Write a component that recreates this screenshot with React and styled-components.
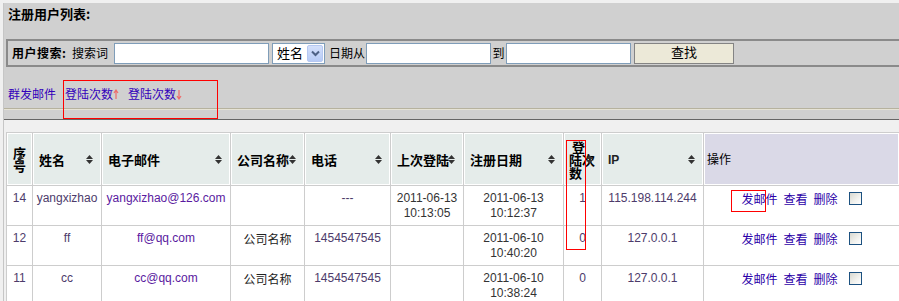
import React from 'react';
import styled, { createGlobalStyle } from 'styled-components';

const GlobalStyle = createGlobalStyle`
    html, body {
        margin: 0;
        padding: 0;
        background: #f0f0f0;
        overflow: hidden;
    }
    body {
        font-family: "Liberation Sans", "Noto Sans CJK SC", sans-serif;
        font-size: 12px;
        color: #333;
    }
`;

const CJK = `"Noto Sans CJK SC", "Liberation Sans", sans-serif`;

const Page = styled.div`
    position: relative;
    padding: 3px 0 0 3px;
    height: 301px;
    box-sizing: border-box;
`;

const Frame = styled.div`
    border-left: 1px solid #c6c6c6;
    height: 100%;
`;

// grey search panel on top
const Panel = styled.div`
    background: #d0d0d0;
    border-bottom: 1px solid #666;
`;

const Title = styled.div`
    height: 36px;
    box-sizing: border-box;
    padding: 3px 4px 0;
    font: bold 13px/16px ${CJK};
    color: #000;
`;

const SearchBar = styled.div`
    margin-left: 2px;
    height: 28px;
    box-sizing: border-box;
    border: 2px solid #8a8a8a;
    border-right: none;
    display: flex;
    align-items: center;
    padding-left: 4px;
    font: 12px/16px ${CJK};
    color: #000;
`;

const Label = styled.span`
    width: ${p => p.w}px;
    flex: none;
    font-weight: ${p => p.bold ? 'bold' : 'normal'};
    letter-spacing: ${p => p.bold ? '0.5px' : '0'};
    text-align: ${p => p.center ? 'center' : 'left'};
`;

const TextInput = styled.input`
    width: ${p => p.w}px;
    height: 21px;
    box-sizing: border-box;
    border: 1px solid #7f9db9;
    background: #fff;
    margin: 0;
    padding: 0 3px;
    flex: none;
    outline: none;
`;

const SelectBox = styled.div`
    width: 53px;
    height: 21px;
    box-sizing: border-box;
    border: 1px solid #7f9db9;
    background: #fff;
    margin: 0 4px 0 3px;
    display: flex;
    align-items: center;
    justify-content: space-between;
    padding: 0 1px 0 4px;
    font: 13px/16px ${CJK};
    flex: none;
`;

const SelectArrow = styled.span`
    width: 16px;
    height: 17px;
    box-sizing: border-box;
    border: 1px solid #b6c8f2;
    border-radius: 2px;
    background: linear-gradient(#d4e0fb, #b7cbf6);
    display: flex;
    align-items: center;
    justify-content: center;
`;

const FindButton = styled.button`
    width: 100px;
    height: 21px;
    margin-left: 3px;
    box-sizing: border-box;
    border: 1px solid #848484;
    background: #ece9d8;
    font: 13px/14px ${CJK};
    color: #000;
    padding: 0 0 3px;
    flex: none;
`;

const LinkBar = styled.div`
    height: 41px;
    box-sizing: border-box;
    display: flex;
    align-items: flex-end;
    gap: 9px;
    padding: 0 0 6px 4px;
    font: 12px/16px ${CJK};
`;

const NavLink = styled.a`
    color: #3300bb;
    text-decoration: none;
    display: inline-flex;
    align-items: center;
`;

const Rule = styled.div`
    border-top: 1px solid #b6b29e;
    border-bottom: 1px solid #e6e3d6;
`;

const PanelFoot = styled.div`
    height: 9px;
`;

// user table
const Table = styled.table`
    margin: 12px 0 0 2px;
    width: 893px;
    table-layout: fixed;
    border-collapse: collapse;
    background: #fff;
`;

const Th = styled.th`
    position: relative;
    height: 52px;
    padding: 0 6px;
    border: 1px solid #cdcdcd;
    box-shadow: inset 0 0 0 1px #fff;
    background: ${p => p.tone === 'op' ? '#dad9e7' : '#e5ecea'};
    text-align: left;
    vertical-align: middle;
    font: ${p => p.tone === 'op' ? 'normal 12px/16px' : 'bold 13px/13px'} ${CJK};
    color: #000;
    white-space: nowrap;
`;

const HeadLatin = styled.span`
    font: bold 12px "Liberation Sans", sans-serif;
    color: #222;
`;

const SortMark = styled.svg`
    position: absolute;
    right: 8px;
    top: 50%;
    margin-top: -4px;
`;

const Td = styled.td`
    height: 34px;
    padding: 5px 2px 0;
    border: 1px solid #cdcdcd;
    text-align: center;
    vertical-align: top;
    font-size: 12px;
    line-height: 15px;
    color: ${p => p.tone === 'link' ? '#5a1aa0' : p.tone === 'soft' ? '#4d3b6b' : '#333'};
    white-space: nowrap;
`;

const CjkText = styled.span`
    font-family: ${CJK};
    color: #222;
`;

const OpGroup = styled.div`
    display: inline-flex;
    align-items: center;
    gap: 6px;
    font: 12px/15px ${CJK};
`;

const OpLink = styled.a`
    color: #2c00a8;
    text-decoration: none;
`;

const CheckBox = styled.span`
    width: 13px;
    height: 13px;
    box-sizing: border-box;
    margin-left: 5px;
    border: 1px solid #1c5180;
    background: linear-gradient(135deg, #d8d8d0 0%, #f2f2ee 60%, #fff 100%);
`;

// red annotation frames drawn over the screenshot
const Marker = styled.div`
    position: absolute;
    border: 1px solid #f00;
    pointer-events: none;
`;

const Sort = () => (
    <SortMark width="7" height="9" viewBox="0 0 7 9">
        <path d="M0 4 L3.5 0 L7 4 Z M0 5 L7 5 L3.5 9 Z" fill="#333" />
    </SortMark>
);

const Arrow = ({ down }) => (
    <svg width="6" height="11" viewBox="0 0 6 11">
        {down
            ? <path d="M3 1 V9 M1 7 L3 10 L5 7" stroke="#ee6a6a" strokeWidth="1.2" fill="none" />
            : <path d="M3 10 V2 M1 4 L3 1 L5 4" stroke="#ee6a6a" strokeWidth="1.2" fill="none" />}
    </svg>
);

const columns = [26, 69, 129, 74, 86, 73, 100, 38, 102, 196];

const rows = [
    { id: 14, name: 'yangxizhao', mail: 'yangxizhao@126.com', company: '', phone: '---', last: ['2011-06-13', '10:13:05'], reg: ['2011-06-13', '10:12:37'], count: 1, ip: '115.198.114.244' },
    { id: 12, name: 'ff', mail: 'ff@qq.com', company: '公司名称', phone: '1454547545', last: null, reg: ['2011-06-10', '10:40:20'], count: 0, ip: '127.0.0.1' },
    { id: 11, name: 'cc', mail: 'cc@qq.com', company: '公司名称', phone: '1454547545', last: null, reg: ['2011-06-10', '10:38:24'], count: 0, ip: '127.0.0.1' },
];

const TwoLines = ({ lines }) => lines ? <>{lines[0]}<br />{lines[1]}</> : null;

export default function App() {
    return (
        <Page>
            <GlobalStyle />
            <Frame>
                <Panel>
                    <Title>注册用户列表:</Title>
                    <SearchBar>
                        <Label w={60} bold>用户搜索:</Label>
                        <Label w={42}>搜索词</Label>
                        <TextInput w={155} />
                        <SelectBox>
                            姓名
                            <SelectArrow>
                                <svg width="9" height="7" viewBox="0 0 9 7">
                                    <path d="M1 1.5 L4.5 5 L8 1.5" stroke="#4d6185" strokeWidth="2" fill="none" />
                                </svg>
                            </SelectArrow>
                        </SelectBox>
                        <Label w={37}>日期从</Label>
                        <TextInput w={125} />
                        <Label w={15} center>到</Label>
                        <TextInput w={125} />
                        <FindButton>查找</FindButton>
                    </SearchBar>
                    <LinkBar>
                        <NavLink>群发邮件</NavLink>
                        <NavLink>登陆次数<Arrow /></NavLink>
                        <NavLink>登陆次数<Arrow down /></NavLink>
                    </LinkBar>
                    <Rule />
                    <PanelFoot />
                </Panel>
                <Table>
                    <colgroup>
                        {columns.map((w, i) => <col key={i} style={{ width: w }} />)}
                    </colgroup>
                    <thead>
                        <tr>
                            <Th>序<br />号<Sort /></Th>
                            <Th>姓名<Sort /></Th>
                            <Th>电子邮件<Sort /></Th>
                            <Th>公司名称<Sort /></Th>
                            <Th>电话<Sort /></Th>
                            <Th>上次登陆<Sort /></Th>
                            <Th>注册日期<Sort /></Th>
                            <Th style={{ paddingLeft: 5 }}>&nbsp;登<br />陆次<br />数<Sort /></Th>
                            <Th><HeadLatin>IP</HeadLatin><Sort /></Th>
                            <Th tone="op" style={{ paddingLeft: 3 }}>操作</Th>
                        </tr>
                    </thead>
                    <tbody>
                        {rows.map(r => (
                            <tr key={r.id}>
                                <Td tone="soft">{r.id}</Td>
                                <Td tone="soft">{r.name}</Td>
                                <Td tone="link">{r.mail}</Td>
                                <Td><CjkText>{r.company}</CjkText></Td>
                                <Td tone="soft">{r.phone}</Td>
                                <Td><TwoLines lines={r.last} /></Td>
                                <Td><TwoLines lines={r.reg} /></Td>
                                <Td tone="soft">{r.count}</Td>
                                <Td tone="soft">{r.ip}</Td>
                                <Td>
                                    <OpGroup>
                                        <OpLink>发邮件</OpLink>
                                        <OpLink>查看</OpLink>
                                        <OpLink>删除</OpLink>
                                        <CheckBox />
                                    </OpGroup>
                                </Td>
                            </tr>
                        ))}
                    </tbody>
                </Table>
            </Frame>
            <Marker style={{ left: 63, top: 80, width: 153, height: 37 }} />
            <Marker style={{ left: 566, top: 140, width: 18, height: 108 }} />
            <Marker style={{ left: 731, top: 190, width: 33, height: 20 }} />
        </Page>
    );
}
